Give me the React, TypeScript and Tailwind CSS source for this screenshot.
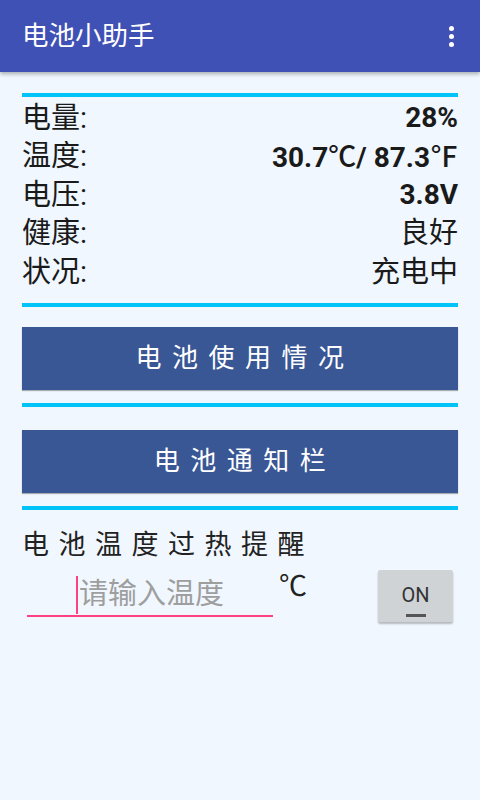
import { useState } from "react";
import type { ReactNode } from "react";

const font = "font-['Roboto','Noto_Sans_CJK_SC',sans-serif]";

const Unit = ({ children }: { children: ReactNode }) => (
  <span className="font-['Noto_Sans_CJK_SC',sans-serif] font-medium">{children}</span>
);

const rows: { label: string; value: ReactNode; bold?: boolean }[] = [
  { label: "电量:", value: "28%", bold: true },
  {
    label: "温度:",
    value: (
      <>
        30.7<Unit>℃</Unit>/ 87.3<Unit>℉</Unit>
      </>
    ),
    bold: true,
  },
  { label: "电压:", value: "3.8V", bold: true },
  { label: "健康:", value: "良好" },
  { label: "状况:", value: "充电中" },
];

function Divider({ className = "" }: { className?: string }) {
  return <div className={`h-[4px] bg-[#00c4f7] ${className}`} />;
}

function BlockButton({ label, className = "" }: { label: string; className?: string }) {
  return (
    <button className={`flex h-[63px] w-full items-center justify-center bg-[#3a5795] text-[26px] tracking-[10.5px] text-white shadow-[0_1px_1px_rgba(0,0,0,0.3)] ${className}`}>
      <span className="pl-[10px]">{label}</span>
    </button>
  );
}

export default function App() {
  const [alarmOn, setAlarmOn] = useState(false);

  return (
    <div className={`min-h-[800px] w-[480px] bg-[#f0f7fe] ${font}`}>
      {/* Toolbar */}
      <div className="flex h-[72px] items-center justify-between bg-[#3f51b5] pl-[22px] pr-[26px] shadow-[0_2px_4px_rgba(0,0,0,0.3)]">
        <span className="text-[26.5px] text-white">电池小助手</span>
        <div className="flex flex-col gap-[3px]">
          <span className="h-[5px] w-[5px] rounded-full bg-white" />
          <span className="h-[5px] w-[5px] rounded-full bg-white" />
          <span className="h-[5px] w-[5px] rounded-full bg-white" />
        </div>
      </div>

      <div className="px-[22px] pt-[21px]">
        <Divider />

        <div className="mt-[2px]">
          {rows.map((r) => (
            <div key={r.label} className="flex h-[38.5px] items-center justify-between text-[28px] leading-none text-[#1a1a1a]">
              <span className="text-[29px]">{r.label}</span>
              <span className={r.bold ? "font-bold" : "text-[29px]"}>{r.value}</span>
            </div>
          ))}
        </div>

        <Divider className="mt-[11px]" />
        <BlockButton label="电池使用情况" className="mt-[20px]" />
        <Divider className="mt-[13px]" />
        <BlockButton label="电池通知栏" className="mt-[23px]" />
        <Divider className="mt-[13px]" />

        <div className="mt-[17px] text-[27px] leading-[36px] tracking-[9.5px] text-[#222]">
          电池温度过热提醒
        </div>

        <div className="mt-[7px] flex items-start">
          <div className="ml-[5px] mt-[5px] flex h-[42px] w-[246px] items-center justify-center border-b-2 border-[#ff4081]">
            <span className="mr-[1px] h-[38px] w-[2px] bg-[#ff4081]" />
            <span className="text-[29px] leading-none text-[#9e9e9e]">请输入温度</span>
          </div>
          <span className="ml-[6px] font-['Noto_Sans_CJK_SC',sans-serif] text-[28px] leading-[28px] text-[#222]">℃</span>
          <button
            onClick={() => setAlarmOn(!alarmOn)}
            className="ml-auto mr-[5px] flex h-[52px] w-[75px] flex-col items-center justify-center rounded-[2px] bg-[#d0d3d6] pt-[10px] shadow-[0_2px_2px_rgba(0,0,0,0.25)]"
          >
            <span className="text-[20px] leading-none text-[#333]">ON</span>
            <span className={`mt-[9px] h-[3px] w-[20px] ${alarmOn ? "bg-[#3f51b5]" : "bg-[#555]"}`} />
          </button>
        </div>
      </div>
    </div>
  );
}
